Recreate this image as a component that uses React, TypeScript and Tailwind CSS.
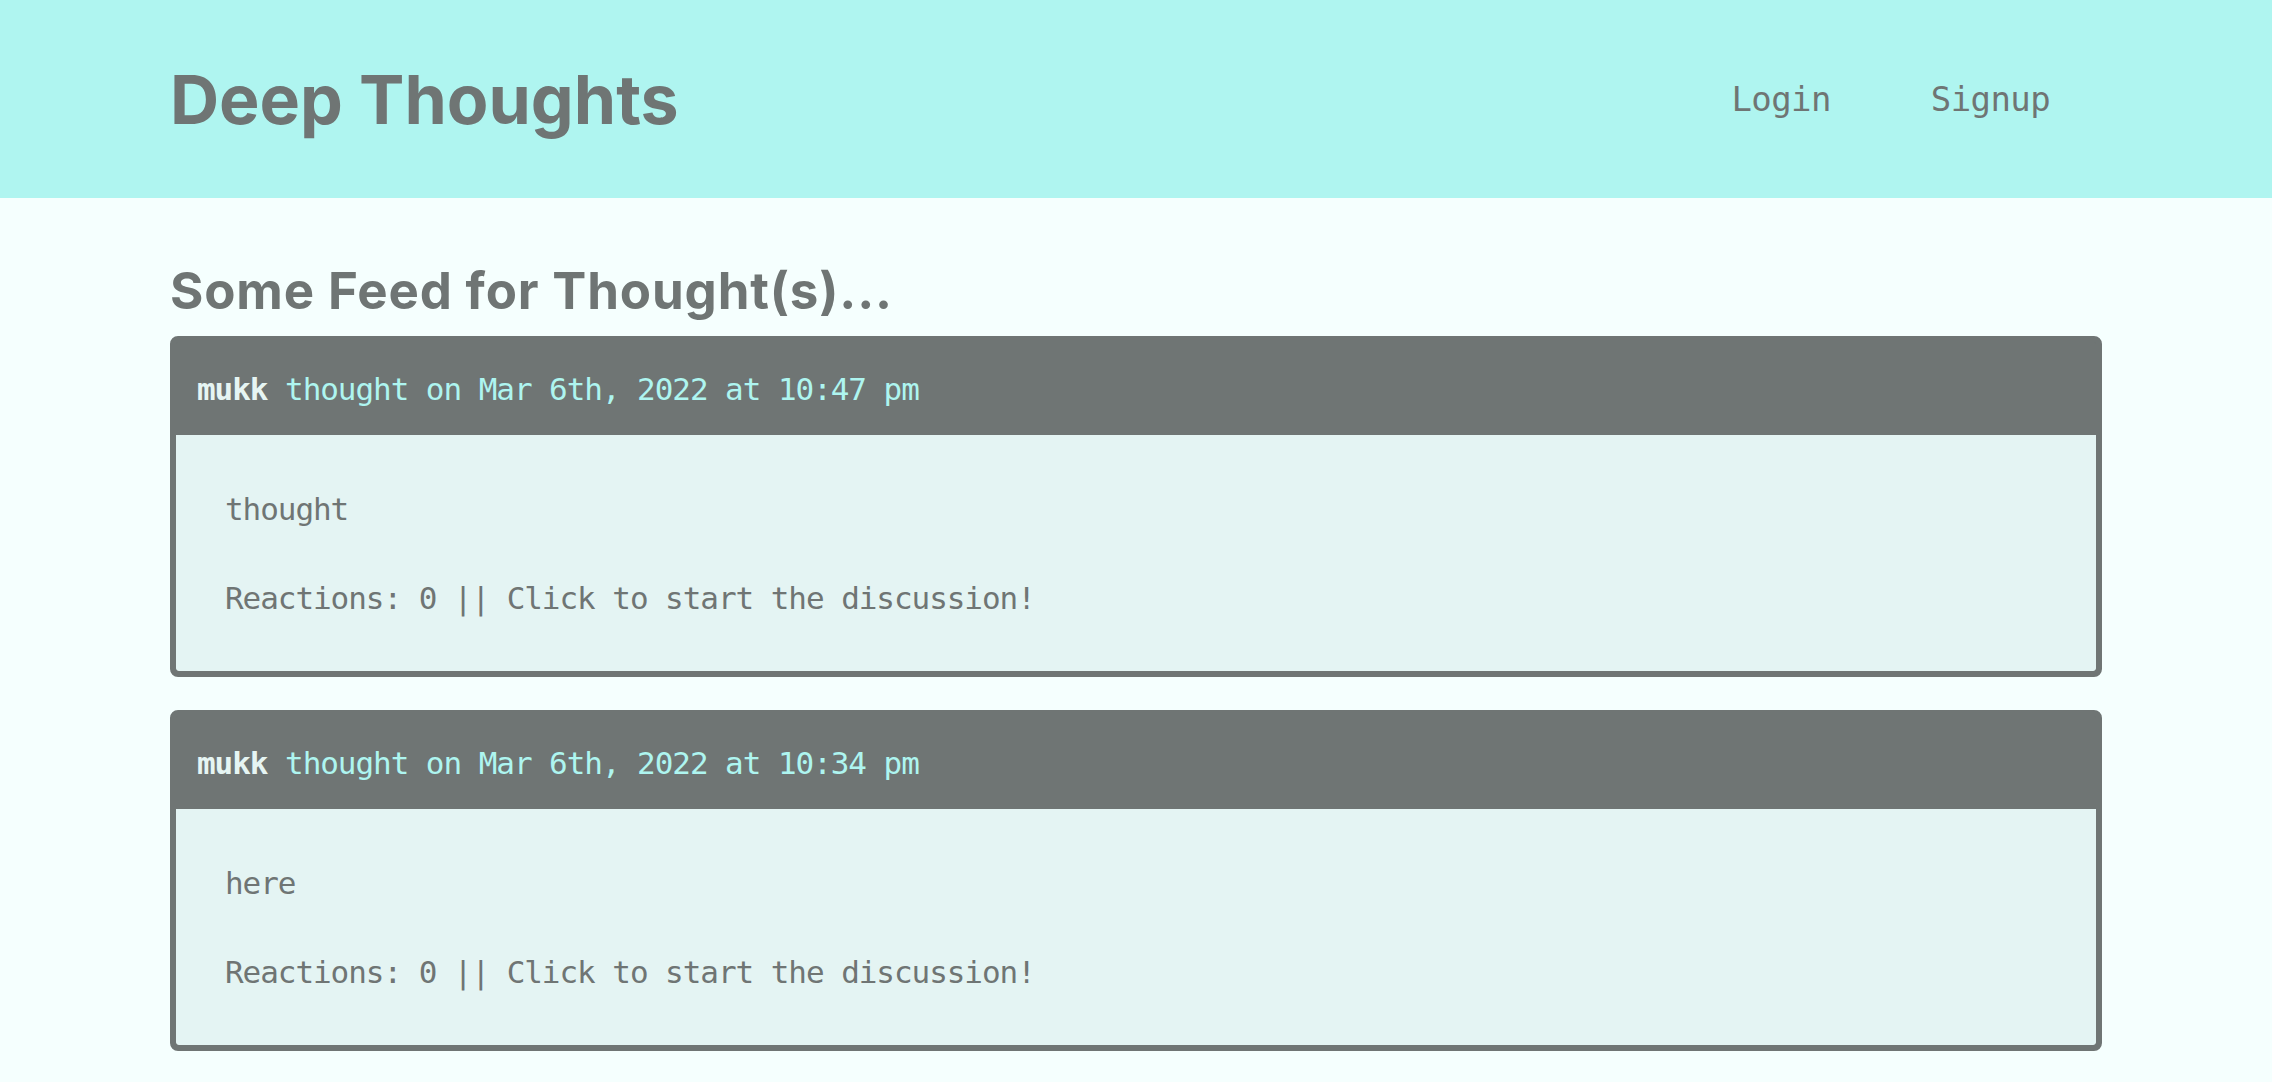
const thoughts = [
  { username: 'mukk', createdAt: 'Mar 6th, 2022 at 10:47 pm', text: 'thought', reactions: 0 },
  { username: 'mukk', createdAt: 'Mar 6th, 2022 at 10:34 pm', text: 'here', reactions: 0 },
];

const mono = "font-['DejaVu_Sans_Mono',monospace]";

const App = () => {
  return (
    <div className="min-h-screen bg-[#f5fffe] text-[#6f7574]">
      <header className="h-[198px] bg-[#aff5f0] flex items-center">
        <div className="w-[1932px] mx-auto flex items-center justify-between">
          <h1 className="font-['Inter',sans-serif] font-bold text-[68px] leading-[80px]">Deep Thoughts</h1>
          <nav className={`${mono} flex gap-[100px] pr-[52px] text-[34px] tracking-[-0.6px] leading-[44px]`}>
            <a>Login</a>
            <a>Signup</a>
          </nav>
        </div>
      </header>

      <main className="w-[1932px] mx-auto pt-[62px] pb-[33px]">
        <h2 className="font-['Inter',sans-serif] font-bold text-[51px] tracking-[0.85px] leading-[61px] mb-[15px]">
          Some Feed for Thought(s)...
        </h2>

        <div className="flex flex-col gap-[33px]">
          {thoughts.map((thought, index) => (
            <div key={index} className="border-[6px] border-[#6f7574] rounded-[8px] overflow-hidden bg-[#6f7574]">
              <div className={`${mono} h-[93px] flex items-center pl-[21px] text-[31px] tracking-[-1.06px] leading-[44px] text-[#aef5f0]`}>
                <span className="font-bold text-[#e6f5f3]">{thought.username}</span>
                <span>&nbsp;thought on {thought.createdAt}</span>
              </div>
              <div className={`${mono} bg-[#e4f4f3] rounded-b-[3px] pl-[49px] pt-[52px] pb-[51px] text-[31px] tracking-[-1.06px] leading-[44px]`}>
                <p>{thought.text}</p>
                <p className="mt-[45px]">
                  Reactions: {thought.reactions} || Click to start the discussion!
                </p>
              </div>
            </div>
          ))}
        </div>
      </main>
    </div>
  );
};

export default App;
